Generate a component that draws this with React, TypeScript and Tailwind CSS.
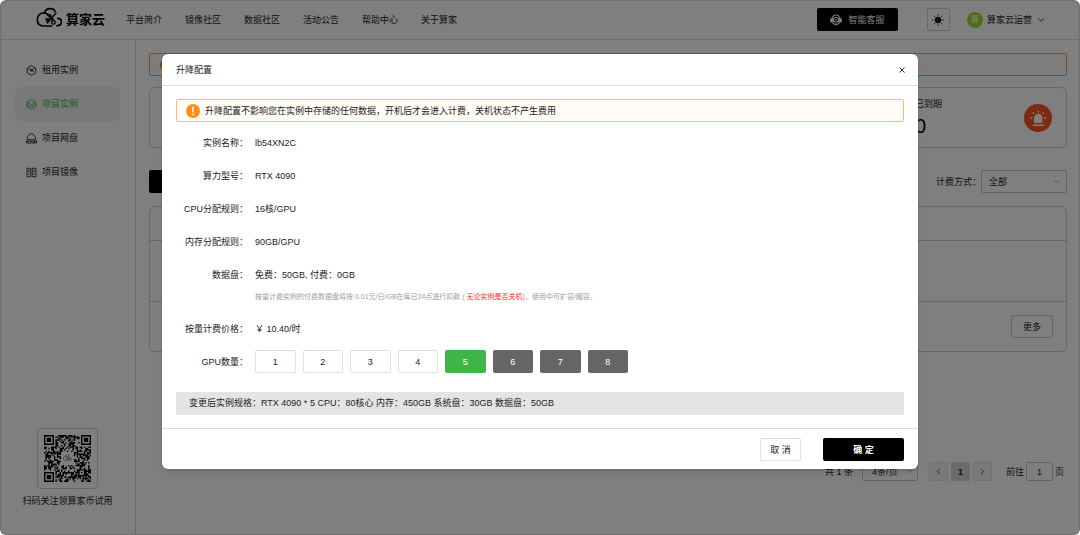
import { useState } from "react";
import type { ReactNode } from "react";
import { ChevronDown, ChevronLeft, ChevronRight } from "lucide-react";

const NAV_ITEMS = ["平台简介", "镜像社区", "数据社区", "活动公告", "帮助中心", "关于算家"];

const GPU_COUNTS = [1, 2, 3, 4, 5, 6, 7, 8];
const MAX_AVAILABLE = 5;

const QR_SIZE = 33;

function CubeIcon() {
  return (
    <svg viewBox="0 0 22 22" className="size-[11px]" fill="none" stroke="currentColor" strokeWidth="1.8">
      <path d="M11 1.5 19.5 6v10L11 20.5 2.5 16V6z" strokeLinejoin="round" />
      <path d="M5.5 7.500 11 10l5 4M11 10l6-3" />
      <circle cx="11" cy="11" r="1.500" />
    </svg>
  );
}

function LayersIcon() {
  return (
    <svg viewBox="0 0 22 22" className="size-[11px]" fill="none" stroke="currentColor" strokeWidth="1.8" strokeLinejoin="round">
      <path d="M11 1.5 20 6.5l-9 5-9-5z" />
      <path d="M2 6.5V11l9 5 9-5V6.5M2 11v4.5l9 5 9-5V11" />
    </svg>
  );
}

function CloudDiskIcon() {
  return (
    <svg viewBox="0 0 22 22" className="size-[11px]" fill="none" stroke="currentColor" strokeWidth="1.8" strokeLinejoin="round">
      <path d="M4 13.500a4.500 4.500 0 0 1 .5-7.500A6.500 6.500 0 0 1 17 6.500a4.500 4.500 0 0 1 1 7z" />
      <path d="M3.500 13.500 1 16v4h20v-4l-2.500-2.500M1 16.500h20M15 18.300h3" />
    </svg>
  );
}

function ImageStackIcon() {
  return (
    <svg viewBox="0 0 22 22" className="size-[11px]" fill="none" stroke="currentColor" strokeWidth="1.7">
      <path d="M2 2.500h7.500v17H2zM12.500 2.500H20v17h-7.500z" />
      <path d="M4 14.500h3.500M14.500 14.500H18M5.700 5v6M16.200 5v6" />
    </svg>
  );
}

const MENU: { label: string; icon: ReactNode; active?: boolean }[] = [
  { label: "租用实例", icon: <CubeIcon /> },
  { label: "项目实例", icon: <LayersIcon />, active: true },
  { label: "项目网盘", icon: <CloudDiskIcon /> },
  { label: "项目镜像", icon: <ImageStackIcon /> },
];

function CloudMark({ className }: { className: string }) {
  return (
    <svg viewBox="0 0 78 78" className={className} fill="none" stroke="currentColor" strokeWidth="5" strokeLinecap="round">
      <path d="M47 57H22C8 57 4 46 4 37c0-12 10-21 24-19 5 1 9 4 12 8" />
      <path d="M26 19C26 9 34 5 44 5c8 0 12 4 13 9" />
      <path d="M32 22 50 38M60 18 34 48M30 36h22M44 22v12" strokeWidth="4" />
      <circle cx="52" cy="46" r="5.5" strokeWidth="4" />
      <circle cx="33" cy="41" r="3" strokeWidth="3" />
      <path d="M65 34c14 0 16 20 1 22h-3" />
    </svg>
  );
}

function HeadsetIcon() {
  return (
    <svg viewBox="0 0 24 24" className="size-3" fill="none" stroke="currentColor" strokeWidth="2.4">
      <path d="M4 10a8 8 0 0 1 16 0" />
      <path d="M1.500 10h3v6h-3zM19.500 10h3v6h-3z" fill="currentColor" />
      <rect x="6.500" y="7" width="11" height="9" rx="4" />
      <path d="M10 10.500v2.500M14 10.500v2.500" />
      <path d="M5 17c2 5 12 5 14 0M9 21.500h6" />
    </svg>
  );
}

function SunIcon() {
  return (
    <svg viewBox="0 0 24 24" className="size-3" stroke="currentColor" strokeWidth="2" strokeLinecap="round">
      <circle cx="12" cy="12" r="6" fill="currentColor" />
      <path d="M12 1v1M12 22v1M1 12h1M22 12h1M4.200 4.200l.7.7M19.100 19.100l.7.7M4.200 19.800l.7-.7M19.100 4.900l.7-.7" />
    </svg>
  );
}

function AlarmIcon() {
  return (
    <svg viewBox="0 0 28 28" className="size-7">
      <circle cx="14" cy="14" r="14" fill="#fa5426" />
      <path d="M10 19v-5a4.200 4.200 0 0 1 8.400 0v5z" fill="#fff" />
      <path d="M9 21.200h11" stroke="#fff" strokeWidth="1.5" />
      <path d="M14.200 6.500v2M8.800 8.500l1 1.200M19.600 8.500l-1 1.200M6.500 14h1.800M20.200 14H22" stroke="#fff" strokeWidth="1.300" />
    </svg>
  );
}

function WarnIcon() {
  return (
    <svg viewBox="0 0 14 14" className="size-[14px] shrink-0">
      <circle cx="7" cy="7" r="7" fill="#ff8d1a" />
      <path d="M7 3.300v4.700" stroke="#fff" strokeWidth="1.4" strokeLinecap="round" />
      <circle cx="7" cy="10.400" r=".9" fill="#fff" />
    </svg>
  );
}

// finder squares plus a deterministic fill for the data area
function isDark(x: number, y: number) {
  const corners = [
    [0, 0],
    [QR_SIZE - 7, 0],
    [0, QR_SIZE - 7],
  ];
  for (const [cx, cy] of corners) {
    const dx = x - cx;
    const dy = y - cy;
    if (dx >= -1 && dx <= 7 && dy >= -1 && dy <= 7) {
      const ring = Math.max(Math.abs(dx - 3), Math.abs(dy - 3));
      return ring === 3 || ring <= 1;
    }
  }
  const align = Math.max(Math.abs(x - 26), Math.abs(y - 26));
  if (align <= 2) return align !== 1;
  if (Math.abs(x - 16) <= 4 && Math.abs(y - 16) <= 4) return false;
  let h = (x * 374761393 + y * 668265263) | 0;
  h = Math.imul(h ^ (h >>> 13), 1274126177);
  return ((h ^ (h >>> 16)) & 15) < 8;
}

function QrCode() {
  let d = "";
  for (let y = 0; y < QR_SIZE; y++) {
    for (let x = 0; x < QR_SIZE; x++) {
      if (isDark(x, y)) d += `M${x} ${y}h1v1h-1z`;
    }
  }
  return (
    <div className="grid place-items-center">
      <svg viewBox={`0 0 ${QR_SIZE} ${QR_SIZE}`} className="col-start-1 row-start-1 size-[47px]">
        <path d={d} fill="#000" />
      </svg>
      <CloudMark className="col-start-1 row-start-1 w-[9px] text-[#2f6b45]" />
    </div>
  );
}

function Header() {
  return (
    <header className="flex h-10 items-center border-b border-[#dcdcdc] pr-[34px] pl-9">
      <a href="#" className="flex items-center gap-1 text-[13px] leading-5 font-bold text-black">
        <CloudMark className="size-[26px]" />
        算家云
      </a>
      <nav className="ml-[21px] flex gap-[23px]">
        {NAV_ITEMS.map((item) => (
          <a key={item} href="#" className="whitespace-nowrap">
            {item}
          </a>
        ))}
      </nav>
      <button className="ml-auto flex h-[23px] w-[81px] items-center justify-center gap-[6px] rounded-xs bg-black text-white">
        <HeadsetIcon />
        智能客服
      </button>
      <button aria-label="主题" className="ml-[29px] flex size-[23px] items-center justify-center rounded-xs border border-[#d0d0d0]">
        <SunIcon />
      </button>
      <button className="ml-[17px] flex items-center gap-1 whitespace-nowrap">
        <span className="flex size-4 items-center justify-center rounded-full bg-[#9fd82f] text-[8px] text-white">算</span>
        算家云运营
        <ChevronDown className="size-[10px]" />
      </button>
    </header>
  );
}

function Sidebar() {
  return (
    <aside className="flex w-[136px] shrink-0 flex-col border-r border-[#d0d0d0] px-[15px] pt-[13px] pb-[26px]">
      <nav>
        {MENU.map((item) => (
          <a
            key={item.label}
            href="#"
            className={`flex h-[34px] items-center gap-[5px] rounded-md px-[11px] ${
              item.active ? "bg-[#f1f1f1] text-[#3fb548]" : ""
            }`}
          >
            {item.icon}
            {item.label}
          </a>
        ))}
      </nav>
      <div className="mt-auto flex flex-col items-center gap-1">
        <div className="rounded-sm border border-[#cfcfcf] p-[6px]">
          <QrCode />
        </div>
        <p className="whitespace-nowrap">扫码关注领算家币试用</p>
      </div>
    </aside>
  );
}

function Pagination() {
  return (
    <div className="mt-[110px] mr-[3px] flex items-center justify-end">
      <span>共 1 条</span>
      <div className="ml-[9px] grid items-center">
        <select
          aria-label="条/页"
          defaultValue="4"
          className="col-start-1 row-start-1 h-[19px] w-14 appearance-none rounded-xs border border-[#c8c8c8] pl-[9px]"
        >
          <option value="4">4条/页</option>
        </select>
        <ChevronDown className="pointer-events-none col-start-1 row-start-1 mr-1 size-[9px] justify-self-end text-gray-400" />
      </div>
      <div className="mr-[14px] ml-[11px] flex gap-[3px]">
        <button aria-label="‹" className="flex size-[19px] items-center justify-center rounded-xs border border-[#e2e2e2] bg-[#f2f2f2]">
          <ChevronLeft className="size-[9px]" />
        </button>
        <button className="flex size-[19px] items-center justify-center rounded-xs bg-[#d6d6d6] font-bold">1</button>
        <button aria-label="›" className="flex size-[19px] items-center justify-center rounded-xs border border-[#e2e2e2] bg-[#f2f2f2]">
          <ChevronRight className="size-[9px]" />
        </button>
      </div>
      <label htmlFor="page-jump">前往</label>
      <input
        id="page-jump"
        defaultValue="1"
        className="mx-[2px] h-[19px] w-[27px] rounded-xs border border-[#c8c8c8] text-center"
      />
      <span>页</span>
    </div>
  );
}

function Main() {
  return (
    <main className="flex-1 px-[13px] pt-[13px]">
      <div className="flex h-[23px] items-center rounded-xs border border-[#ff9b45] bg-[#fffbf6] pl-[10px]">
        <WarnIcon />
      </div>

      <section className="mt-[11px] flex h-[61px] items-center justify-end rounded-md border border-[#cfcfcf] pr-[14px]">
        <div>
          <p className="leading-4">已到期</p>
          <p className="text-[20px] leading-7 text-black">0</p>
        </div>
        <div className="ml-[82px]">
          <AlarmIcon />
        </div>
      </section>

      {/* Filters */}
      <div className="mt-[22px] flex items-center">
        <div className="h-[23px] w-[81px] rounded-xs bg-black" />
        <label htmlFor="billing" className="ml-auto">
          计费方式：
        </label>
        <div className="grid items-center">
          <select
            id="billing"
            className="col-start-1 row-start-1 h-[23px] w-[86px] appearance-none rounded-xs border border-[#c8c8c8] pl-[7px]"
          >
            <option>全部</option>
          </select>
          <ChevronDown className="pointer-events-none col-start-1 row-start-1 mr-[6px] size-[9px] justify-self-end text-gray-400" />
        </div>
      </div>

      <section className="mt-[13px] rounded-md border border-[#cfcfcf]">
        <div className="h-[34px] border-b border-[#cfcfcf]" />
        <div className="h-[61px] border-b border-[#cfcfcf]" />
        <div className="flex h-[49px] items-center justify-end pr-[13px]">
          <button className="h-[23px] w-[42px] rounded-xs border border-[#c8c8c8]">更多</button>
        </div>
      </section>

      <Pagination />
    </main>
  );
}

function Row({ label, children }: { label: string; children: ReactNode }) {
  return (
    <div className="flex min-h-[33px] items-center gap-[7px]">
      <dt className="w-[72px] shrink-0 text-right whitespace-nowrap">{label}：</dt>
      <dd>{children}</dd>
    </div>
  );
}

function ResizeDialog() {
  const [gpus, setGpus] = useState(5);

  return (
    <div role="dialog" aria-labelledby="resize-title" className="mx-auto mt-[54px] w-[70%] rounded-md bg-white shadow-md">
      <div className="flex h-8 items-center justify-between border-b border-[#dcdcdc] px-[14px]">
        <h2 id="resize-title">升降配置</h2>
        <button aria-label="×" className="flex size-1 items-center justify-center">
          <svg viewBox="0 0 6 6" className="size-[6px] shrink-0" stroke="#333">
            <path d="M.5.5l5 5M5.500.5l-5 5" />
          </svg>
        </button>
      </div>

      <div className="px-[14px] py-[13px]">
        <div className="flex h-[23px] items-center gap-[5px] rounded-xs border border-[#ffbb76] bg-[#fffbf6] px-[9px]">
          <WarnIcon />
          <p>升降配置不影响您在实例中存储的任何数据，开机后才会进入计费，关机状态不产生费用</p>
        </div>

        <dl className="mt-1">
          <Row label="实例名称">lb54XN2C</Row>
          <Row label="算力型号">RTX 4090</Row>
          <Row label="CPU分配规则">16核/GPU</Row>
          <Row label="内存分配规则">90GB/GPU</Row>
          <Row label="数据盘">免费：50GB, 付费：0GB</Row>
          <dd className="mb-[9px] ml-[79px] text-[7px] leading-3 text-[#9b9ba3]">
            按量计费实例的付费数据盘将按 0.01元/日/GB在每日24点进行扣款 (<span className="text-[#ff1f1f]"> 无论实例是否关机</span>)。使用中可扩容/缩容。
          </dd>
          <Row label="按量计费价格">￥ 10.40/时</Row>
          <Row label="GPU数量">
            <div className="grid w-[373px] grid-cols-8 gap-[7px]">
              {GPU_COUNTS.map((n) => (
                <button
                  key={n}
                  disabled={n > MAX_AVAILABLE}
                  onClick={() => setGpus(n)}
                  className={`h-[23px] rounded-xs ${
                    n > MAX_AVAILABLE
                      ? "bg-[#666666] text-white"
                      : n === gpus
                        ? "bg-[#3fb548] text-white"
                        : "border border-[#dcdfe6]"
                  }`}
                >
                  {n}
                </button>
              ))}
            </div>
          </Row>
        </dl>

        <p className="mt-[14px] rounded-xs bg-[#e4e4e4] px-[13px] leading-[23px]">
          变更后实例规格：RTX 4090 * {gpus} CPU：{gpus * 16}核心 内存：{gpus * 90}GB 系统盘：30GB 数据盘：50GB
        </p>
      </div>

      <div className="flex justify-end gap-[22px] border-t border-[#dcdcdc] px-[14px] pt-[9px] pb-2">
        <button className="h-[23px] w-[41px] rounded-xs border border-[#dcdfe6]">取 消</button>
        <button className="h-[23px] w-[81px] rounded-xs bg-black font-bold text-white">确 定</button>
      </div>
    </div>
  );
}

export default function App() {
  return (
    <div className="grid min-h-screen overflow-hidden rounded-md bg-white font-['Liberation_Sans','Noto_Sans_CJK_SC',sans-serif] text-[9px] leading-4 text-[#222]">
      <div className="col-start-1 row-start-1 flex flex-col">
        <Header />
        <div className="flex flex-1">
          <Sidebar />
          <Main />
        </div>
      </div>

      {/* Modal layer */}
      <div className="z-10 col-start-1 row-start-1 rounded-md bg-black/50 inset-ring inset-ring-[#707070]">
        <ResizeDialog />
      </div>
    </div>
  );
}
